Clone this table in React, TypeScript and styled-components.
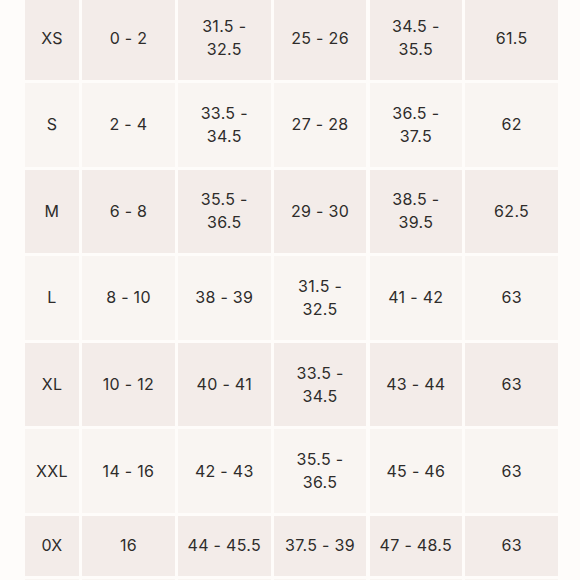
import React from "react";
import styled, { createGlobalStyle } from "styled-components";

const Global = createGlobalStyle`
  html, body { margin: 0; padding: 0; background: #fefcfa; }
  body { overflow: hidden; width: 580px; height: 580px; }
`;

const Page = styled.div`
  width: 580px;
  height: 580px;
  overflow: hidden;
  background: #fefcfa;
  padding-left: 25px;
  box-sizing: border-box;
`;

const Table = styled.div`
  display: grid;
  grid-template-columns: 54px repeat(5, 92.6px);
  grid-template-rows: repeat(6, 83.6px) 60px 40px;
  gap: 3px 3.2px;
  margin-top: -3.6px;
`;

const Cell = styled.div<{ $dark: boolean }>`
  background: ${(p) => (p.$dark ? "#f3ece9" : "#f9f5f2")};
  display: flex;
  align-items: center;
  justify-content: center;
  text-align: center;
  font-family: "Inter", "Noto Sans", sans-serif;
  font-size: 16px;
  line-height: 23px;
  letter-spacing: 0.3px;
  color: #2e2c2b;
  white-space: pre-line;
`;

const rows: string[][] = [
  ["XS", "0 - 2", "31.5 -\n32.5", "25 - 26", "34.5 -\n35.5", "61.5"],
  ["S", "2 - 4", "33.5 -\n34.5", "27 - 28", "36.5 -\n37.5", "62"],
  ["M", "6 - 8", "35.5 -\n36.5", "29 - 30", "38.5 -\n39.5", "62.5"],
  ["L", "8 - 10", "38 - 39", "31.5 -\n32.5", "41 - 42", "63"],
  ["XL", "10 - 12", "40 - 41", "33.5 -\n34.5", "43 - 44", "63"],
  ["XXL", "14 - 16", "42 - 43", "35.5 -\n36.5", "45 - 46", "63"],
  ["0X", "16", "44 - 45.5", "37.5 - 39", "47 - 48.5", "63"],
  ["", "", "", "", "", ""],
];

export default function App() {
  return (
    <>
      <Global />
      <Page>
        <Table>
          {rows.map((r, i) =>
            r.map((c, j) => (
              <Cell key={`${i}-${j}`} $dark={i % 2 === 0}>
                {c}
              </Cell>
            ))
          )}
        </Table>
      </Page>
    </>
  );
}
